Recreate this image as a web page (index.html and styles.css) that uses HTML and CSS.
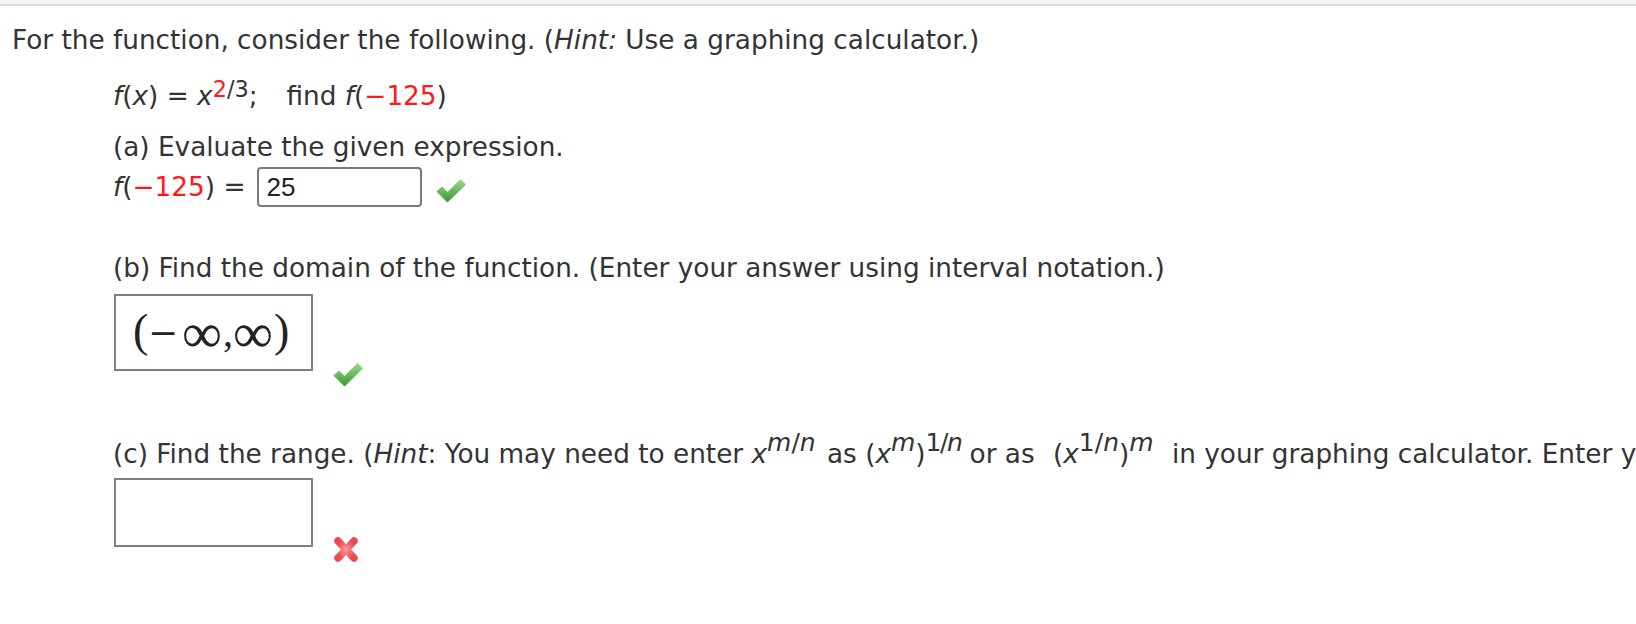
FILE: index.html
```html
<!DOCTYPE html>
<html>
<head>
<meta charset="utf-8">
<link rel="stylesheet" href="styles.css">
</head>
<body>
<div class="topbar"></div>
<div class="page">
  <p class="intro">For the function, consider the following. (<i>Hint:</i> Use a graphing calculator.)</p>
  <div class="indent">
    <p class="fx"><i>f</i>(<i>x</i>) = <i>x</i><sup class="exp"><span class="red">2</span>/3</sup>;<span class="find">find <i>f</i>(<span class="red">−125</span>)</span></p>
    <p class="part-a">(a) Evaluate the given expression.</p>
    <div class="row row-a">
      <span class="label"><i>f</i>(<span class="red">−125</span>) =</span>
      <div class="input input-a">25</div>
      <svg class="check check-a" width="30" height="25" viewBox="0 0 30 25">
        <defs>
          <linearGradient id="g1" x1="0" y1="0" x2="0" y2="1">
            <stop offset="0" stop-color="#9bd98c"/>
            <stop offset="1" stop-color="#3b9a33"/>
          </linearGradient>
        </defs>
        <path d="M1.5 13.5 L6 9.5 L11.5 15 L24.5 2 L29 6.5 L11.5 23.5 Z" fill="url(#g1)" stroke="url(#g1)" stroke-width="1.5" stroke-linejoin="round"/>
      </svg>
    </div>
    <p class="part-b">(b) Find the domain of the function. (Enter your answer using interval notation.)</p>
    <div class="row row-b">
      <div class="mathbox"><span class="m-paren">(</span><span class="m-minus">−</span><span class="m-inf">∞</span><span class="m-comma">,</span><span class="m-inf">∞</span><span class="m-paren">)</span></div>
      <svg class="check check-b" width="30" height="25" viewBox="0 0 30 25">
        <defs>
          <linearGradient id="g2" x1="0" y1="0" x2="0" y2="1">
            <stop offset="0" stop-color="#9bd98c"/>
            <stop offset="1" stop-color="#3b9a33"/>
          </linearGradient>
        </defs>
        <path d="M1.5 13.5 L6 9.5 L11.5 15 L24.5 2 L29 6.5 L11.5 23.5 Z" fill="url(#g2)" stroke="url(#g2)" stroke-width="1.5" stroke-linejoin="round"/>
      </svg>
    </div>
    <p class="part-c">(c) Find the range. (<i>Hint</i>: You may need to enter <i>x</i><sup class="s s1"><i>m</i>/<i>n</i></sup> as (<i>x</i><sup class="s"><i>m</i></sup>)<sup class="s s3">1/<i>n</i></sup> or as <span class="grp">(<i>x</i><sup class="s">1/<i>n</i></sup>)<sup class="s s5"><i>m</i></sup></span> in your graphing calculator. Enter your answer using interval notation.)</p>
    <div class="row row-c">
      <div class="mathbox empty"></div>
      <svg class="cross" width="26" height="27" viewBox="0 0 26 27">
        <defs>
          <radialGradient id="g3" cx="0.5" cy="0.5" r="0.6">
            <stop offset="0" stop-color="#ff9a9a"/>
            <stop offset="1" stop-color="#ea4a4a"/>
          </radialGradient>
        </defs>
        <path d="M5 5 L21 22 M21 5 L5 22" stroke="url(#g3)" stroke-width="7.5" stroke-linecap="round" fill="none"/>
      </svg>
    </div>
  </div>
</div>
</body>
</html>
```
FILE: styles.css
```css
html, body {
  margin: 0;
  padding: 0;
  overflow: hidden;
  background: #fff;
}
body {
  font-family: "DejaVu Sans", Verdana, sans-serif;
  font-size: 26.3px;
  color: #333;
}
.topbar {
  height: 4px;
  background: #f4f4f4;
  border-bottom: 2px solid #d9d9d9;
}
.page {
  padding-left: 12px;
  white-space: nowrap;
}
p {
  margin: 0;
  line-height: 30px;
}
.intro {
  margin-top: 19px;
}
.indent {
  padding-left: 101px;
}
.fx {
  margin-top: 26px;
}
.find {
  margin-left: 29px;
}
.red {
  color: #ff1a1a;
}
sup {
  line-height: 0;
  font-size: 0.85em;
  vertical-align: 0.5em;
}
sup.exp {
  vertical-align: 0.34em;
}
.part-a {
  margin-top: 21px;
}
.row {
  display: flex;
  align-items: flex-start;
}
.row-a {
  margin-top: 5px;
}
.label {
  line-height: 30px;
  margin-top: 5px;
  margin-right: 12px;
}
.input {
  box-sizing: border-box;
  width: 165px;
  height: 40px;
  border: 2px solid #7a7a7a;
  border-radius: 4px;
  font-family: "Liberation Sans", Arial, sans-serif;
  font-size: 26px;
  line-height: 37px;
  padding-left: 7px;
  color: #222;
}
.check-a {
  margin-top: 11px;
  margin-left: 14px;
}
.part-b {
  margin-top: 46px;
}
.row-b {
  margin-top: 11px;
}
.mathbox {
  box-sizing: border-box;
  width: 199px;
  height: 77px;
  border: 2px solid #808080;
  margin-left: 1px;
  padding-left: 17px;
  font-family: "Liberation Serif", "DejaVu Serif", serif;
  font-size: 40px;
  color: #222;
  display: flex;
  align-items: center;
}
.m-paren {
  display: inline-block;
  width: 12px;
  text-align: center;
  font-size: 46px;
  line-height: 46px;
  margin-top: -4px;
}
.m-minus {
  display: inline-block;
  width: 36px;
  text-align: center;
  font-family: "DejaVu Serif", serif;
  font-weight: 200;
  font-size: 36px;
  line-height: 40px;
}
.m-inf {
  display: inline-block;
  width: 42px;
  text-align: center;
  font-size: 56px;
  line-height: 40px;
}
.m-comma {
  display: inline-block;
  width: 9px;
  text-align: center;
  font-size: 40px;
  line-height: 40px;
}
.check-b {
  margin-top: 68px;
  margin-left: 20px;
}
.part-c {
  margin-top: 52px;
}
.s {
  font-size: 0.95em;
}
.s1 {
  padding-right: 3px;
}
.s3 {
  letter-spacing: -1.5px;
}
.grp {
  margin-left: 10px;
}
.s5 {
  padding-right: 10px;
}
.row-c {
  margin-top: 9px;
}
.mathbox.empty {
  height: 69px;
}
.cross {
  margin-top: 58px;
  margin-left: 20px;
}
```
